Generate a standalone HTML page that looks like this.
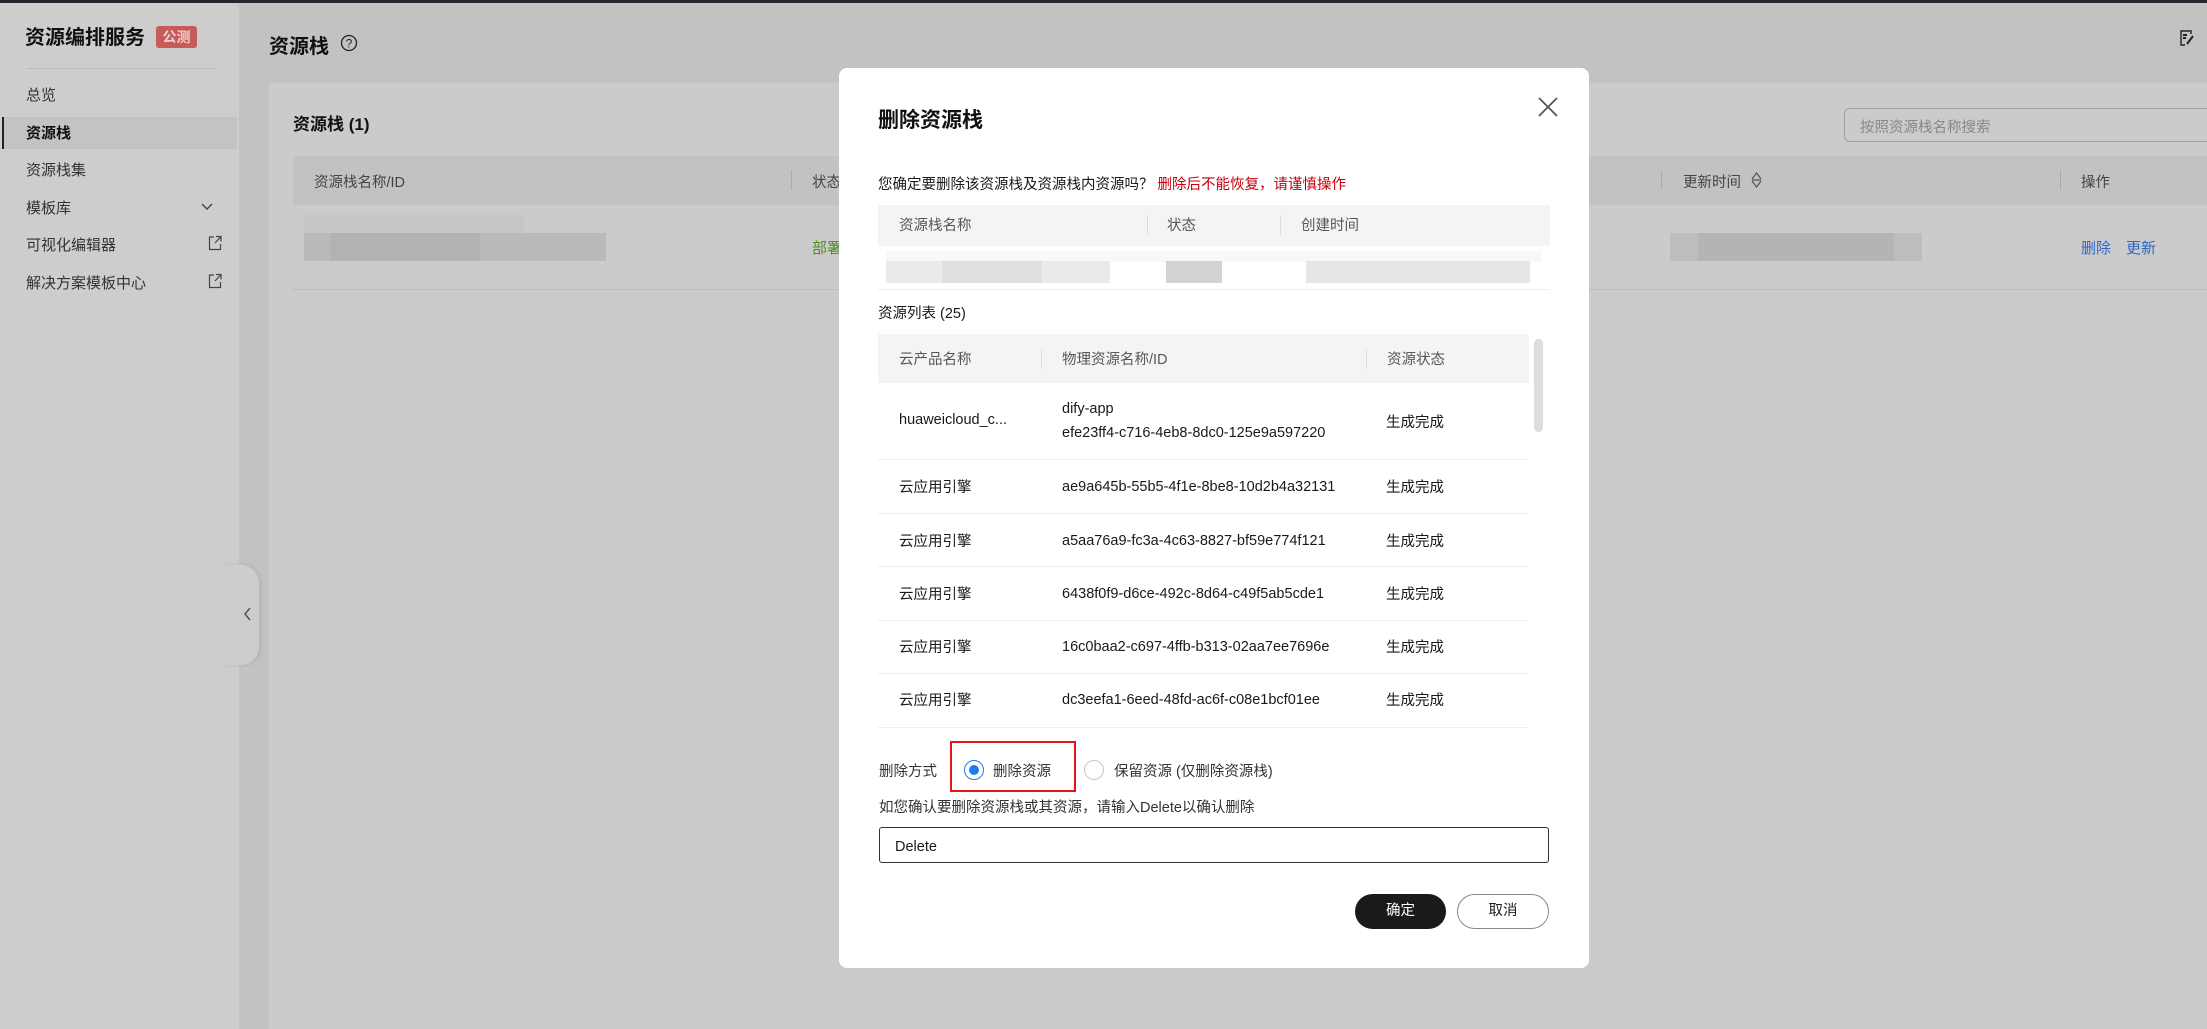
<!DOCTYPE html>
<html><head><meta charset="utf-8"><style>
*{margin:0;padding:0;box-sizing:border-box}
body{width:2207px;height:1029px;overflow:hidden;background:#c2c2c2;font-family:"Liberation Sans","Noto Sans CJK SC",sans-serif;color:#1a1a1a;position:relative}
.a{position:absolute;white-space:nowrap}
.b{position:absolute}
.m{font-size:14.5px;color:#191919}
.hd{color:#575757;font-size:14.5px}
.blur{position:absolute;background:#bdbdbd}
</style></head><body>
<div class="b" style="left:0;top:0;width:2207px;height:3px;background:#23262c"></div>
<!-- sidebar -->
<div class="b" style="left:0;top:3px;width:239px;height:1026px;background:#cdcdcd"></div>
<div class="a" style="left:25px;top:21px;font-size:20px;font-weight:bold;color:#111">资源编排服务</div>
<div class="a" style="left:156px;top:26px;width:41px;height:22px;background:#c75b57;border-radius:3px;color:#f0d0d0;font-size:14px;font-weight:bold;text-align:center;line-height:22px">公测</div>
<div class="b" style="left:27px;top:68px;width:190px;height:1px;background:#bcbcbc"></div>
<div class="a" style="left:26px;top:84px;font-size:15px;color:#333">总览</div>
<div class="b" style="left:2px;top:117px;width:235px;height:32px;background:#c3c3c3;border-left:2px solid #222"></div>
<div class="a" style="left:26px;top:122px;font-size:15px;font-weight:bold;color:#111">资源栈</div>
<div class="a" style="left:26px;top:159px;font-size:15px;color:#333">资源栈集</div>
<div class="a" style="left:26px;top:197px;font-size:15px;color:#333">模板库</div>
<svg class="b" style="left:200px;top:200px" width="14" height="14" viewBox="0 0 14 14"><path d="M2 4l5 5 5-5" fill="none" stroke="#444" stroke-width="1.4"/></svg>
<div class="a" style="left:26px;top:234px;font-size:15px;color:#333">可视化编辑器</div>
<div class="a" style="left:26px;top:272px;font-size:15px;color:#333">解决方案模板中心</div>
<svg class="b" style="left:208px;top:235px" width="14" height="16" viewBox="0 0 14 16"><path d="M6 2H1.5v12.5h11V9M8 1.5h5v5M13 1.5L7 8" fill="none" stroke="#444" stroke-width="1.2"/></svg>
<svg class="b" style="left:208px;top:273px" width="14" height="16" viewBox="0 0 14 16"><path d="M6 2H1.5v12.5h11V9M8 1.5h5v5M13 1.5L7 8" fill="none" stroke="#444" stroke-width="1.2"/></svg>
<div class="b" style="left:220px;top:565px;width:39px;height:100px;background:#cdcdcd;border-radius:0 18px 18px 0;box-shadow:2px 0 4px rgba(0,0,0,.08)"></div>
<svg class="b" style="left:242px;top:606px" width="10" height="16" viewBox="0 0 10 16"><path d="M8 2L3 8l5 6" fill="none" stroke="#555" stroke-width="1.5"/></svg>
<!-- main -->
<div class="a" style="left:269px;top:30px;font-size:20px;font-weight:bold;color:#111">资源栈</div>
<svg class="b" style="left:340px;top:34px" width="18" height="18" viewBox="0 0 18 18"><circle cx="9" cy="9" r="7.5" fill="none" stroke="#222" stroke-width="1.3"/><text x="9" y="13.5" font-size="12" text-anchor="middle" fill="#222" font-family="Liberation Sans">?</text></svg>
<svg class="b" style="left:2179px;top:29px" width="16" height="18" viewBox="0 0 16 18"><path d="M12 5V2H2v14h4" fill="none" stroke="#222" stroke-width="1.4"/><path d="M4 6h4M4 9h3M8 15l6-8" stroke="#222" stroke-width="2"/></svg>
<div class="b" style="left:269px;top:83px;width:1938px;height:946px;background:#cbcbcb"></div>
<div class="a" style="left:293px;top:110px;font-size:17px;font-weight:bold;color:#111">资源栈 (1)</div>
<div class="b" style="left:1844px;top:108px;width:370px;height:34px;border:1px solid #a0a0a0;border-radius:6px"></div>
<div class="a" style="left:1860px;top:116px;font-size:14.5px;color:#888">按照资源栈名称搜索</div>
<div class="b" style="left:293px;top:156px;width:1914px;height:49px;background:#c2c2c2"></div>
<div class="a hd" style="left:314px;top:171px;color:#444">资源栈名称/ID</div>
<div class="b" style="left:791px;top:170px;width:1px;height:20px;background:#aaa"></div>
<div class="a hd" style="left:812px;top:171px;color:#444">状态</div>
<div class="b" style="left:1661px;top:170px;width:1px;height:20px;background:#aaa"></div>
<div class="a hd" style="left:1683px;top:171px;color:#444">更新时间</div>
<svg class="b" style="left:1750px;top:171px" width="13" height="18" viewBox="0 0 13 18"><path d="M2 8l4.5-6 4.5 6M2 10l4.5 6 4.5-6M2 9h9" fill="none" stroke="#555" stroke-width="1.2"/></svg>
<div class="b" style="left:2060px;top:170px;width:1px;height:20px;background:#aaa"></div>
<div class="a hd" style="left:2081px;top:171px;color:#444">操作</div>
<div class="b" style="left:293px;top:289px;width:1914px;height:1px;background:#bdbdbd"></div>
<div class="blur" style="left:304px;top:215px;width:220px;height:18px;background:#c6c6c6"></div>
<div class="blur" style="left:304px;top:233px;width:302px;height:28px;background:#bababa"></div>
<div class="blur" style="left:330px;top:233px;width:150px;height:28px;background:#b2b2b2"></div>
<div class="a" style="left:812px;top:237px;font-size:15px;color:#4e8f1a">部署</div>
<div class="blur" style="left:1670px;top:233px;width:252px;height:28px;background:#bdbdbd"></div>
<div class="blur" style="left:1698px;top:233px;width:196px;height:28px;background:#b4b4b4"></div>
<div class="a" style="left:2081px;top:237px;font-size:15px;color:#2e67c5">删除</div>
<div class="a" style="left:2126px;top:237px;font-size:15px;color:#2e67c5">更新</div>
<!-- modal -->
<div class="b" style="left:839px;top:68px;width:750px;height:900px;background:#fff;border-radius:8px"></div>
<div class="a" style="left:878px;top:104px;font-size:21px;font-weight:bold;color:#111">删除资源栈</div>
<svg class="b" style="left:1538px;top:97px" width="20" height="20" viewBox="0 0 20 20"><path d="M1 1l18 18M19 1L1 19" stroke="#555" stroke-width="1.8"/></svg>
<div class="a m" style="left:878px;top:173px">您确定要删除该资源栈及资源栈内资源吗？ <span style="color:#c7000b">删除后不能恢复，请谨慎操作</span></div>
<div class="b" style="left:878px;top:205px;width:672px;height:41px;background:#f4f4f4"></div>
<div class="a hd" style="left:899px;top:214px">资源栈名称</div>
<div class="b" style="left:1147px;top:215px;width:1px;height:20px;background:#ddd"></div>
<div class="a hd" style="left:1167px;top:214px">状态</div>
<div class="b" style="left:1280px;top:215px;width:1px;height:20px;background:#ddd"></div>
<div class="a hd" style="left:1301px;top:214px">创建时间</div>
<div class="b" style="left:878px;top:289px;width:672px;height:1px;background:#eee"></div>
<div class="blur" style="left:886px;top:251px;width:655px;height:11px;background:#f8f8f8"></div>
<div class="blur" style="left:886px;top:261px;width:224px;height:22px;background:#eaeaea"></div>
<div class="blur" style="left:942px;top:261px;width:100px;height:22px;background:#e0e0e0"></div>
<div class="blur" style="left:1166px;top:261px;width:56px;height:22px;background:#d2d2d2"></div>
<div class="blur" style="left:1306px;top:261px;width:224px;height:22px;background:#e6e6e6"></div>
<div class="a m" style="left:878px;top:302px">资源列表 (25)</div>
<div class="b" style="left:878px;top:334px;width:651px;height:49px;background:#f4f4f4"></div>
<div class="a hd" style="left:899px;top:348px">云产品名称</div>
<div class="b" style="left:1041px;top:349px;width:1px;height:20px;background:#ddd"></div>
<div class="a hd" style="left:1062px;top:348px">物理资源名称/ID</div>
<div class="b" style="left:1366px;top:349px;width:1px;height:20px;background:#ddd"></div>
<div class="a hd" style="left:1387px;top:348px">资源状态</div>
<div class="b" style="left:1534px;top:339px;width:9px;height:93px;background:#ddd;border-radius:5px"></div>
<div class="a m" style="left:899px;top:412px">huaweicloud_c...</div>
<div class="a m" style="left:1062px;top:401px">dify-app</div>
<div class="a m" style="left:1062px;top:425px">efe23ff4-c716-4eb8-8dc0-125e9a597220</div>
<div class="a m" style="left:1386px;top:411px">生成完成</div>
<div class="b" style="left:878px;top:459px;width:651px;height:1px;background:#eee"></div>
<div class="a m" style="left:899px;top:476px">云应用引擎</div><div class="a m" style="left:1062px;top:479px">ae9a645b-55b5-4f1e-8be8-10d2b4a32131</div><div class="a m" style="left:1386px;top:476px">生成完成</div>
<div class="b" style="left:878px;top:513px;width:651px;height:1px;background:#eee"></div>
<div class="a m" style="left:899px;top:530px">云应用引擎</div><div class="a m" style="left:1062px;top:533px">a5aa76a9-fc3a-4c63-8827-bf59e774f121</div><div class="a m" style="left:1386px;top:530px">生成完成</div>
<div class="b" style="left:878px;top:566px;width:651px;height:1px;background:#eee"></div>
<div class="a m" style="left:899px;top:583px">云应用引擎</div><div class="a m" style="left:1062px;top:586px">6438f0f9-d6ce-492c-8d64-c49f5ab5cde1</div><div class="a m" style="left:1386px;top:583px">生成完成</div>
<div class="b" style="left:878px;top:620px;width:651px;height:1px;background:#eee"></div>
<div class="a m" style="left:899px;top:636px">云应用引擎</div><div class="a m" style="left:1062px;top:639px">16c0baa2-c697-4ffb-b313-02aa7ee7696e</div><div class="a m" style="left:1386px;top:636px">生成完成</div>
<div class="b" style="left:878px;top:673px;width:651px;height:1px;background:#eee"></div>
<div class="a m" style="left:899px;top:689px">云应用引擎</div><div class="a m" style="left:1062px;top:692px">dc3eefa1-6eed-48fd-ac6f-c08e1bcf01ee</div><div class="a m" style="left:1386px;top:689px">生成完成</div>
<div class="b" style="left:878px;top:727px;width:651px;height:1px;background:#eee"></div>
<div class="a m" style="left:879px;top:760px;color:#333">删除方式</div>
<div class="b" style="left:950px;top:741px;width:126px;height:51px;border:2px solid #e5141b"></div>
<div class="b" style="left:964px;top:760px;width:20px;height:20px;border:1.5px solid #1e7cf0;border-radius:50%"></div>
<div class="b" style="left:969px;top:765px;width:10px;height:10px;background:#1e7cf0;border-radius:50%"></div>
<div class="a m" style="left:993px;top:760px;color:#333">删除资源</div>
<div class="b" style="left:1084px;top:760px;width:20px;height:20px;border:1px solid #c8c8c8;border-radius:50%"></div>
<div class="a m" style="left:1114px;top:760px;color:#333">保留资源 (仅删除资源栈)</div>
<div class="a m" style="left:879px;top:796px;color:#333">如您确认要删除资源栈或其资源，请输入Delete以确认删除</div>
<div class="b" style="left:879px;top:827px;width:670px;height:36px;border:1px solid #333;border-radius:3px"></div>
<div class="a m" style="left:895px;top:839px">Delete</div>
<div class="b" style="left:1355px;top:894px;width:91px;height:35px;background:#1a1a1a;border-radius:18px;color:#fff;font-size:14.5px;text-align:center;line-height:35px">确定</div>
<div class="b" style="left:1457px;top:894px;width:92px;height:35px;border:1px solid #888;border-radius:18px;color:#222;font-size:14.5px;text-align:center;line-height:33px">取消</div>
</body></html>
